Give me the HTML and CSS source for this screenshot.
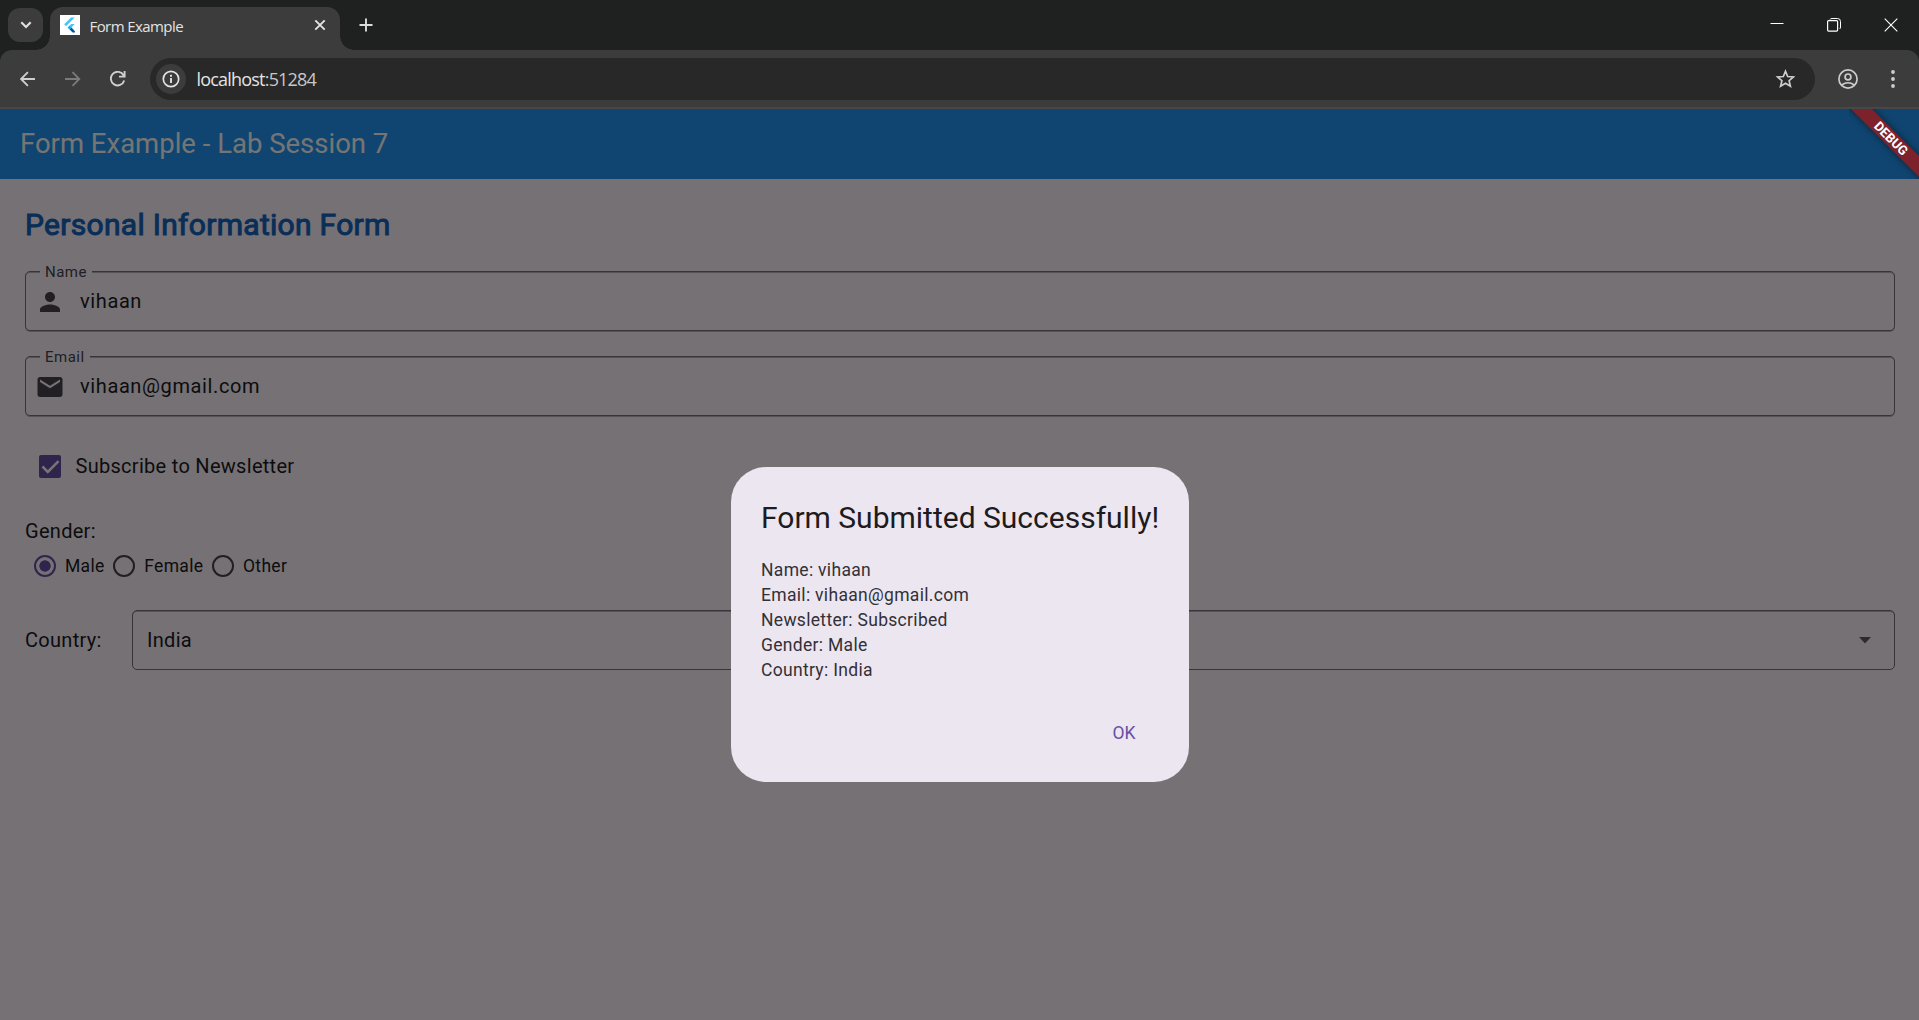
FILE: index.html
```html
<!DOCTYPE html>
<html lang="en">
<head>
<meta charset="utf-8">
<title>Form Example</title>
<link rel="stylesheet" href="styles.css">
</head>
<body>
<div class="window">
  <header class="tabstrip">
    <button class="tab-search" aria-label="Search tabs"><svg width="12" height="8" viewBox="0 0 12 8"><path d="M1.3 1.3 6 6l4.700-4.700" fill="none" stroke="#dededc" stroke-width="2.200"/></svg></button>
    <div class="tab">
      <svg class="favicon" width="20" height="20" viewBox="0 0 20 20"><rect width="20" height="20" fill="#fff"/><path d="M14.700 2.500H11L4.200 9.300l1.900 1.900z" fill="#47c5fb"/><path d="M14.700 9h-3.500L7.700 12.600l1.900 1.900z" fill="#47c5fb"/><path d="M9.600 14.500 11.500 12.600l3.400 3.600v1.300h-2.300z" fill="#00569e"/><path d="m7.700 12.600 1.900-1.900 1.900 1.900-1.900 1.900z" fill="#00b5f8"/></svg>
      <span class="tab-title">Form Example</span>
      <svg class="tab-close" width="12" height="12" viewBox="0 0 12 12"><path d="m1.300 1.300 9.400 9.400m0-9.400-9.400 9.400" stroke="#e3e3e3" stroke-width="1.900"/></svg>
    </div>
    <svg class="new-tab" width="14" height="14" viewBox="0 0 14 14"><path d="M7 .5v13M.5 7h13" stroke="#dcdcdc" stroke-width="1.900"/></svg>
    <div class="window-controls">
      <svg width="14" height="14" viewBox="0 0 14 14"><path d="M.5 5.500h13" stroke="#fff"/></svg>
      <svg width="14" height="14" viewBox="0 0 14 14" fill="none" stroke="#fff"><path d="M3 1.500Q3.300.5 5 .5h5.500q3 0 3 3V9q0 1.500-1 2" stroke-width="1"/><rect x=".6" y="2.600" width="10" height="10.500" rx="1" stroke-width="1.200"/></svg>
      <svg width="14" height="14" viewBox="0 0 14 14"><path d="m.7.700 12.600 12.600m0-12.600L.7 13.300" stroke="#fff" stroke-width="1.100"/></svg>
    </div>
  </header>
  <nav class="toolbar">
    <svg class="back" width="16" height="16" viewBox="0 0 16 16"><path d="M15 8H1.400M7.900 1.200 1.100 8l6.800 6.800" fill="none" stroke="#cfcfcf" stroke-width="1.800"/></svg>
    <svg class="forward" width="16" height="16" viewBox="0 0 16 16"><path d="M0 8h13.800M7.500 1.200 14.300 8l-6.800 6.800" fill="none" stroke="#7b7b7b" stroke-width="1.800"/></svg>
    <svg class="reload" width="16" height="16" viewBox="0 0 16 16"><path d="M14.200 9.500A6.800 6.800 0 1 1 13.700 4.500M14.600 0v5.600H9" fill="none" stroke="#cfcfcf" stroke-width="1.900"/></svg>
    <div class="address">
      <span class="site-info"><svg width="18" height="18" viewBox="0 0 18 18"><circle cx="9" cy="9" r="7.700" fill="none" stroke="#e3e3e3" stroke-width="1.700"/><path d="M9 8v5M9 4.800v1.900" stroke="#e3e3e3" stroke-width="1.900"/></svg></span>
      <span class="url">localhost<span class="port">:51284</span></span>
      <svg class="star" width="20" height="20" viewBox="0 0 20 20"><path d="m10.500 2.300 2.200 5.200 5.700.5-4.300 3.700 1.300 5.500-4.900-2.900-4.900 2.900 1.300-5.500L2.600 8l5.700-.5z" fill="none" stroke="#cdcdcd" stroke-width="1.700"/></svg>
    </div>
    <svg class="profile" width="20" height="20" viewBox="0 0 20 20" fill="none" stroke="#cdcdcd" stroke-width="1.700"><circle cx="10" cy="10" r="9.100"/><circle cx="10" cy="7.900" r="2.900"/><path d="M3.700 16q6.300-4.500 12.600 0"/></svg>
    <svg class="more" width="4" height="18" viewBox="0 0 4 18" fill="#cdcdcd"><circle cx="2" cy="2" r="1.900"/><circle cx="2" cy="9" r="1.900"/><circle cx="2" cy="16" r="1.900"/></svg>
  </nav>
  <main class="page">
    <div class="appbar">Form Example - Lab Session 7</div>
    <form class="form">
      <h1 class="heading">Personal Information Form</h1>
      <div class="field">
        <span class="field-label">Name</span>
        <svg width="30" height="30" viewBox="0 0 24 24"><path d="M12 12c2.210 0 4-1.790 4-4s-1.790-4-4-4-4 1.790-4 4 1.790 4 4 4zm0 2c-2.670 0-8 1.340-8 4v2h16v-2c0-2.660-5.330-4-8-4z"/></svg>
        <span>vihaan</span>
      </div>
      <div class="field">
        <span class="field-label">Email</span>
        <svg width="30" height="30" viewBox="0 0 24 24"><path d="M20 4H4c-1.100 0-1.990.9-1.990 2L2 18c0 1.100.9 2 2 2h16c1.100 0 2-.9 2-2V6c0-1.100-.9-2-2-2zm0 4-8 5-8-5V6l8 5 8-5v2z"/></svg>
        <span>vihaan@gmail.com</span>
      </div>
      <div class="check-row">
        <span class="checkbox"><svg width="23" height="23" viewBox="0 0 18 18"><path d="m2.700 9 4.200 4.200 8.400-8.400" fill="none" stroke="#fff" stroke-width="2"/></svg></span>
        <span>Subscribe to Newsletter</span>
      </div>
      <div class="gender-label">Gender:</div>
      <div class="radios">
        <span class="radio checked"></span><span class="option male">Male</span>
        <span class="radio"></span><span class="option female">Female</span>
        <span class="radio"></span><span class="option">Other</span>
      </div>
      <div class="country-row">
        <span class="country-label">Country:</span>
        <div class="select"><span>India</span><svg width="12" height="7" viewBox="0 0 12 7"><path d="M0 0h12L6 6.500z" fill="#616161"/></svg></div>
      </div>
    </form>
    <div class="barrier">
      <section class="dialog">
        <h2 class="dialog-title">Form Submitted Successfully!</h2>
        <p class="dialog-body">Name: vihaan<br>Email: vihaan@gmail.com<br>Newsletter: Subscribed<br>Gender: Male<br>Country: India</p>
        <div class="actions"><button class="ok">OK</button></div>
      </section>
    </div>
    <div class="debug-corner"><span class="debug">DEBUG</span></div>
  </main>
</div>
</body>
</html>
```
FILE: styles.css
```css
* { box-sizing: border-box; }
body { margin: 0; font-family: Roboto, sans-serif; overflow: hidden; background: #1f2120; }
svg { display: block; flex: none; }
button { border: 0; padding: 0; font: inherit; }
.window { height: 1020px; display: flex; flex-direction: column; }

.tabstrip { height: 50px; flex: none; display: flex; padding-left: 8px; background: #1f2120; font-family: "Open Sans", "Noto Sans", sans-serif; }
.tab-search { width: 35px; height: 34px; margin: 8px 7px 0 0; border-radius: 12px; background: #3c3c3c; display: flex; align-items: center; justify-content: center; }
.tab { position: relative; width: 290px; height: 43px; margin-top: 7px; padding: 0 14px 7px 10px; border-radius: 13px 13px 0 0; background: #3c3c3c; display: flex; align-items: center; }
.tab::before, .tab::after { content: ""; position: absolute; bottom: 0; width: 14px; height: 14px; }
.tab::before { left: -14px; background: radial-gradient(circle at 0 0, transparent 13.500px, #3c3c3c 14px); }
.tab::after { right: -14px; background: radial-gradient(circle at 100% 0, transparent 13.500px, #3c3c3c 14px); }
.tab-title { margin: 1px 0 0 9.500px; font-size: 15px; letter-spacing: -0.580px; color: #e3e3e3; }
.tab-close { margin-left: auto; }
.new-tab { margin: 18px 0 0 19px; }
.window-controls { margin: 18px 21px 0 auto; display: flex; gap: 43px; }

.toolbar { height: 59px; flex: none; display: flex; align-items: center; padding: 0 24.500px 0 20px; background: #3c3c3c; border-bottom: 2px solid #474747; border-radius: 12px 12px 0 0; }
.forward { margin-left: 29px; }
.reload { margin-left: 29px; }
.address { flex: 1; height: 42px; margin: 1px 22.500px 0 24px; padding: 0 20px 0 6px; border-radius: 21px; background: #282828; display: flex; align-items: center; }
.site-info { width: 30px; height: 30px; border-radius: 50%; background: #3c3c3c; display: flex; align-items: center; justify-content: center; }
.url { margin-left: 10.500px; font: 18px "Open Sans", "Noto Sans", sans-serif; letter-spacing: -0.800px; color: #e3e3e3; }
.port { color: #c7c7c7; }
.star { margin-left: auto; }
.more { margin-left: 33px; }

.page { position: relative; flex: 1; overflow: hidden; background: #fef7ff; }
.appbar { height: 70px; padding: 0 0 2px 20px; display: flex; align-items: center; background: #2196f3; color: #fff; font-size: 27.500px; }
.form { padding: 26px 24px 0 25px; display: flex; flex-direction: column; color: #1d1b20; font-size: 20px; letter-spacing: 0.290px; }
.heading { margin: 0 0 26px; height: 40px; line-height: 40px; font-size: 30px; font-weight: 400; -webkit-text-stroke: 1px #1565c0; letter-spacing: 0.300px; color: #1565c0; }
.field { position: relative; height: 60px; margin-bottom: 25px; padding: 1px 9px 0; border: 1px solid #79747e; border-radius: 5px; box-shadow: inset 0 1px rgba(121, 116, 126, 0.500), 0 1px rgba(121, 116, 126, 0.500); display: flex; align-items: center; gap: 15px; letter-spacing: 0.610px; }
.field > span:last-child { margin-top: -1px; }
.field svg { fill: #49454f; }
.field-label { position: absolute; left: 14px; top: -9px; padding: 0 5px; background: #fef7ff; color: #49454f; font-size: 15px; line-height: 18px; letter-spacing: 0.500px; }
.check-row { height: 60px; margin-top: -5px; padding-left: 14px; display: flex; align-items: center; gap: 14.500px; }
.checkbox { width: 22px; height: 23px; border-radius: 2px; background: #6750a4; display: flex; justify-content: center; }
.gender-label { margin-top: 20px; height: 30px; line-height: 30px; }
.radios { height: 30px; margin-top: 5px; padding-left: 8.500px; display: flex; align-items: center; font-size: 17.500px; letter-spacing: 0.312px; }
.radio { width: 22.500px; height: 22.500px; border: 2.500px solid #49454f; border-radius: 50%; }
.radio.checked { border-color: #6750a4; background: radial-gradient(circle, #6750a4 5.300px, transparent 6px); }
.option { margin-left: 9px; }
.male, .female { margin-right: 8.200px; }
.country-row { height: 60px; margin-top: 29px; display: flex; align-items: center; }
.country-label { width: 107px; }
.select { flex: 1; height: 60px; padding: 0 23px 0 14px; border: 1px solid #79747e; border-radius: 5px; box-shadow: inset 0 1px rgba(121, 116, 126, 0.500); display: flex; align-items: center; justify-content: space-between; }

.barrier { position: absolute; inset: 0; background: rgba(0, 0, 0, 0.54); display: flex; align-items: flex-start; justify-content: center; padding-top: 358.400px; }
.dialog { width: 458px; height: 315px; padding: 30.600px 30.500px; border-radius: 35px; background: #ece6f0; color: #1d1b20; }
.dialog-title { margin: 0 0 20px; font-size: 30px; font-weight: 400; line-height: 40px; white-space: nowrap; }
.dialog-body { margin: 0; font-size: 17.500px; line-height: 25px; letter-spacing: 0.312px; color: #333037; }
.actions { display: flex; justify-content: flex-end; margin: 30px -1px 0 0; }
.ok { width: 70px; height: 40px; background: transparent; color: #6750a4; font-size: 17.500px; }

.debug-corner { position: absolute; top: 0; right: 0; width: 70px; height: 70px; overflow: hidden; }
.debug { position: absolute; width: 140px; height: 15px; right: -42px; top: 21.500px; transform: rotate(45deg); background: #7d212b; box-shadow: 0 0 7px rgba(0, 0, 0, 0.5); color: #fff; font-size: 13px; font-weight: 700; line-height: 15px; text-align: center; }
```
